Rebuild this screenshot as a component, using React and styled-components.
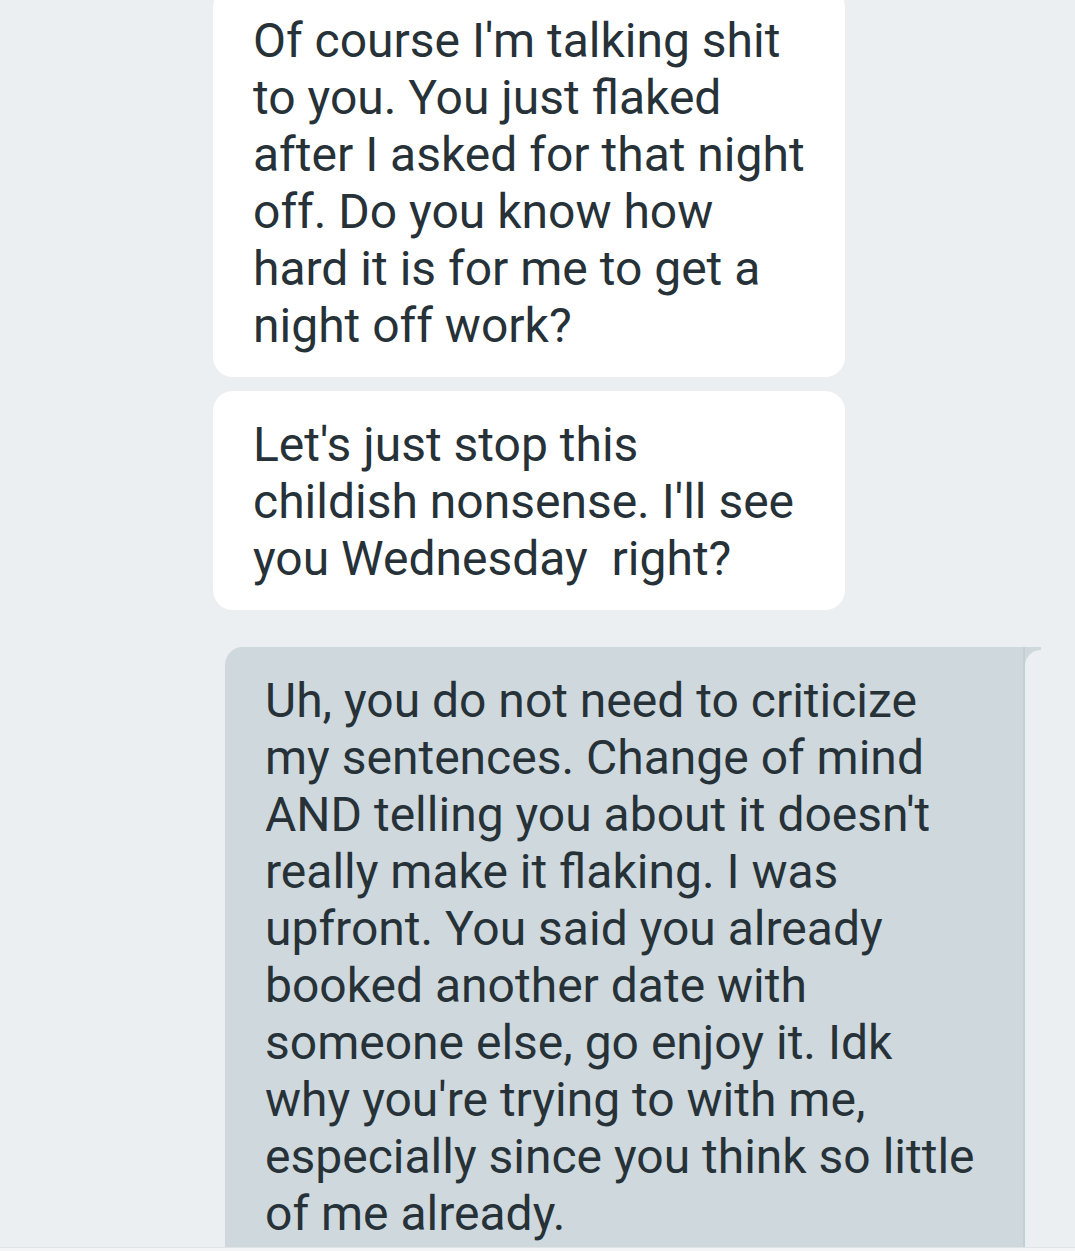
import React from "react";
import styled, { createGlobalStyle } from "styled-components";

const Global = createGlobalStyle`
  html, body { margin: 0; padding: 0; background: #eceff1; }
  * { box-sizing: border-box; }
`;

const Screen = styled.div`
  width: 1075px;
  height: 1251px;
  overflow: hidden;
  display: flex;
  flex-direction: column;
  background: #eceff1;
  font-family: Roboto, "Noto Sans", sans-serif;
  color: #263238;
`;

const Thread = styled.div`
  flex: 1;
  overflow: hidden;
  display: flex;
  flex-direction: column;
  & > :first-child { margin-top: -13px; }
`;

const Bubble = styled.div`
  position: relative;
  align-self: flex-start;
  margin-top: ${(p) => p.$gap}px;
  margin-left: ${(p) => (p.$out ? 225 : 213)}px;
  width: ${(p) => (p.$out ? 800 : 632)}px;
  padding: 25px 20px 23px 40px;
  background: ${(p) => (p.$out ? "#cfd8dc" : "#ffffff")};
  border-radius: ${(p) => (p.$out ? "18px 0 0 0" : "20px")};
  font-size: 48px;
  line-height: 57px;
  ${(p) =>
    p.$out &&
    `
    padding-bottom: 60px;
    box-shadow: inset -2px 0 0 rgba(120,140,150,0.12);
    &::after {
      content: "";
      position: absolute;
      top: 0;
      right: -16px;
      width: 16px;
      height: 19px;
      background: radial-gradient(circle at 100% 100%, transparent 15.5px, #cfd8dc 16.5px);
    }
  `}
`;

const Line = styled.span`
  display: block;
  white-space: pre;
`;

const BottomEdge = styled.div`
  height: 4px;
  flex: none;
  background: #f3f5f6;
  border-top: 1px solid #dfe4e7;
`;

const messages = [
  {
    out: false,
    gap: 0,
    lines: [
      "Of course I'm talking shit",
      "to you. You just flaked",
      "after I asked for that night",
      "off. Do you know how",
      "hard it is for me to get a",
      "night off work?",
    ],
  },
  {
    out: false,
    gap: 14,
    lines: [
      "Let's just stop this",
      "childish nonsense. I'll see",
      "you Wednesday  right?",
    ],
  },
  {
    out: true,
    gap: 37,
    lines: [
      "Uh, you do not need to criticize",
      "my sentences. Change of mind",
      "AND telling you about it doesn't",
      "really make it flaking. I was",
      "upfront. You said you already",
      "booked another date with",
      "someone else, go enjoy it. Idk",
      "why you're trying to with me,",
      "especially since you think so little",
      "of me already.",
    ],
  },
];

export default function App() {
  return (
    <>
      <Global />
      <Screen>
        <Thread>
          {messages.map((m, i) => (
            <Bubble key={i} $out={m.out} $gap={m.gap}>
              {m.lines.map((l, j) => (
                <Line key={j}>{l}</Line>
              ))}
            </Bubble>
          ))}
        </Thread>
        <BottomEdge />
      </Screen>
    </>
  );
}
